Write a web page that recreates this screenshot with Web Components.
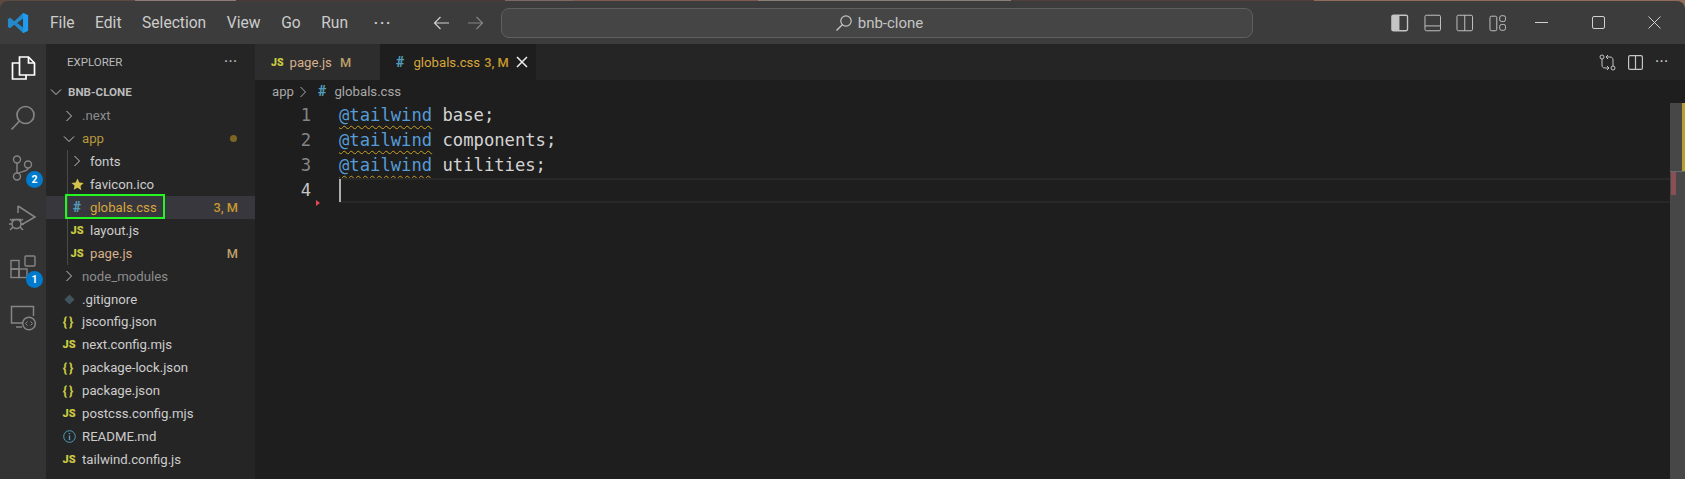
<!DOCTYPE html>
<html>
<head>
<meta charset="utf-8">
<title>bnb-clone</title>
<style>
  html, body { margin: 0; height: 100%; background: #1e1e1e; overflow: hidden; }
  body { font-family: Roboto, "Noto Sans", sans-serif; }
  vs-window { height: 479px; }
</style>
</head>
<body>
<vs-window>
  <vs-titlebar slot="top"></vs-titlebar>
  <vs-activitybar slot="left"></vs-activitybar>
  <vs-explorer slot="side">
    <file-row kind="root" label="BNB-CLONE" text="21"></file-row>
    <file-row kind="closed" label=".next" text="36" color="#8c8c8c"></file-row>
    <file-row kind="open" label="app" text="36" color="#b8983c" dot="1"></file-row>
    <file-row kind="closed" label="fonts" text="44" color="#cccccc" guide="1"></file-row>
    <file-row kind="star" label="favicon.ico" text="44" color="#cccccc" guide="1"></file-row>
    <file-row kind="hash" label="globals.css" text="44" color="#d7a63c" badge="3, M" selected="1" guide="1"></file-row>
    <file-row kind="js" label="layout.js" text="44" color="#cccccc" guide="1"></file-row>
    <file-row kind="js" label="page.js" text="44" color="#d8b08c" badge="M" guide="1"></file-row>
    <file-row kind="closed" label="node_modules" text="36" color="#8c8c8c"></file-row>
    <file-row kind="git" label=".gitignore" text="36" color="#cccccc"></file-row>
    <file-row kind="json" label="jsconfig.json" text="36" color="#cccccc"></file-row>
    <file-row kind="js" label="next.config.mjs" text="36" color="#cccccc"></file-row>
    <file-row kind="json" label="package-lock.json" text="36" color="#cccccc"></file-row>
    <file-row kind="json" label="package.json" text="36" color="#cccccc"></file-row>
    <file-row kind="js" label="postcss.config.mjs" text="36" color="#cccccc"></file-row>
    <file-row kind="info" label="README.md" text="36" color="#cccccc"></file-row>
    <file-row kind="js" label="tailwind.config.js" text="36" color="#cccccc"></file-row>
  </vs-explorer>
  <vs-tabs slot="main"></vs-tabs>
  <vs-editor slot="main">
    <code-line n="1" word="base;"></code-line>
    <code-line n="2" word="components;"></code-line>
    <code-line n="3" word="utilities;"></code-line>
    <code-line n="4" active="1"></code-line>
  </vs-editor>
</vs-window>

<script>
// small shared stroke icon helper
const icon = (w, h, vb, body, extra = "") =>
  `<svg width="${w}" height="${h}" viewBox="${vb}" fill="none" stroke="currentColor" stroke-width="1" ${extra}>${body}</svg>`;

class VsWindow extends HTMLElement {
  constructor() {
    super();
    this.attachShadow({ mode: "open" });
    this.shadowRoot.innerHTML = `
      <style>
        :host { display: flex; flex-direction: column; width: 1685px; background: #1e1e1e; }
        .head { flex: none; padding-top: 1px; background: linear-gradient(90deg, #5c4a40 0 8%, #8d7d74 8% 14%, #4a3a32 14% 30%, #7a6a62 30% 34%, #7d5a4d 34% 45%, #8a8078 45% 60%, #504038 60% 78%, #8f6b58 78% 100%); }
        .body { display: flex; flex: 1; min-height: 0; }
        .main { display: flex; flex-direction: column; flex: 1; min-width: 0; }
      </style>
      <div class="head"><slot name="top"></slot></div>
      <div class="body">
        <slot name="left"></slot>
        <slot name="side"></slot>
        <div class="main"><slot name="main"></slot></div>
      </div>`;
  }
}

class VsTitlebar extends HTMLElement {
  constructor() {
    super();
    this.attachShadow({ mode: "open" });
    const menus = ["File", "Edit", "Selection", "View", "Go", "Run"];
    this.shadowRoot.innerHTML = `
      <style>
        :host { display: flex; align-items: center; height: 43px; background: #3c3c3c; color: #cccccc; font-size: 15.6px; border-radius: 8px 8px 0 0; }
        .logo { width: 22px; height: 22px; margin-left: 7px; flex: none; }
        nav { display: flex; gap: 20.6px; margin-left: 21px; width: 383px; flex: none; }
        nav span:last-child { letter-spacing: 2px; font-weight: 700; font-size: 14px; line-height: 18px; margin-left: 5px; }
        .arrows { display: flex; gap: 17px; width: 68px; flex: none; }
        .back { color: #cfcfcf; } .forward { color: #848484; }
        .search { display: flex; align-items: center; justify-content: center; gap: 5px; box-sizing: border-box; width: 752px; height: 30px; flex: none;
          background: #454545; border: 1px solid #5f5f5f; border-radius: 8px; color: #c4c4c4; font-size: 15px; padding-left: 4px; }
        .layout { display: flex; gap: 15px; margin-left: 138px; color: #c4c4c4; width: 115px; flex: none; }
        .win { display: flex; margin-left: 29px; color: #d0d0d0; }
        .win svg { margin-right: 43.5px; }
      </style>
      <svg class="logo" viewBox="0 0 24 24">
        <path d="M17.5 1 23 3.6v16.8L17.5 23 8 14l-4.6 3.6L1 16.4V7.6l2.4-1.2L8 10z" fill="#2489ca"/>
        <path d="M17.5 7 11 12l6.5 5z" fill="#3c3c3c"/>
        <path d="M17.5 1 23 3.6v16.8L17.5 23z" fill="#1f9cf0"/>
      </svg>
      <nav>${menus.map(m => `<span>${m}</span>`).join("")}<span>···</span></nav>
      <div class="arrows">
        ${icon(17, 16, "0 0 17 16", '<path d="M16 8H1.5M7.5 2 1.5 8l6 6" stroke-width="1.2"/>', 'class="back"')}
        ${icon(17, 16, "0 0 17 16", '<path d="M1 8h14.5M9.5 2l6 6-6 6" stroke-width="1.2"/>', 'class="forward"')}
      </div>
      <div class="search">
        ${icon(18, 18, "0 0 18 18", '<circle cx="11" cy="7" r="5.2" stroke-width="1.2"/><path d="M7.3 10.7 1.5 16.5" stroke-width="1.4"/>')}
        <span>bnb-clone</span>
      </div>
      <div class="layout">
        <svg width="18" height="18" viewBox="0 0 18 18" fill="none" stroke="currentColor" stroke-width="1.4"><rect x="1" y="1" width="16" height="16" rx="1.5"/><path d="M1.5 1.5H8v15H1.5z" fill="currentColor"/></svg>
        ${icon(18, 18, "0 0 18 18", '<rect x="1" y="1" width="16" height="16" rx="1.5"/><path d="M1 12h16"/>', 'stroke-width="1.4"')}
        ${icon(18, 18, "0 0 18 18", '<rect x="1" y="1" width="16" height="16" rx="1.5"/><path d="M9 1v16"/>', 'stroke-width="1.4"')}
        ${icon(18, 18, "0 0 18 18", '<rect x="1" y="2" width="7" height="15" rx="1.5"/><rect x="11" y="1.5" width="6" height="6" rx="2"/><rect x="11" y="10.5" width="6" height="6" rx="2"/>')}
      </div>
      <div class="win">
        ${icon(13, 13, "0 0 13 13", '<path d="M0 6.5h13"/>')}
        ${icon(13, 13, "0 0 13 13", '<rect x=".5" y=".5" width="12" height="12" rx="1.5"/>')}
        ${icon(13, 13, "0 0 13 13", '<path d="M.5.5l12 12M12.5.5l-12 12"/>')}
      </div>`;
  }
}

class VsActivitybar extends HTMLElement {
  constructor() {
    super();
    this.attachShadow({ mode: "open" });
    this.shadowRoot.innerHTML = `
      <style>
        :host { display: flex; flex-direction: column; align-items: center; width: 46px; flex: none; background: #333333; color: #858585; padding-top: 11px; box-sizing: border-box; }
        .item { position: relative; width: 26px; height: 26px; margin-bottom: 24px; display: flex; justify-content: center; align-items: center; }
        .item.on { color: #ffffff; }
        .item svg { flex: none; }
        .badge { position: absolute; left: 16px; top: 16px; width: 17px; height: 17px; border-radius: 50%; background: #007acc; color: #fff; font-size: 10.5px; font-weight: 700; display: flex; align-items: center; justify-content: center; }
      </style>
      <div class="item on">
        <svg width="26" height="26" viewBox="0 0 26 26" fill="none" stroke="currentColor" stroke-width="1.7"><path d="M9.5 2h9l6 6v12h-15z"/><path d="M18.5 2v6h6"/><path d="M9.5 8H2.5v16H16v-4"/></svg>
      </div>
      <div class="item">
        <svg width="26" height="26" viewBox="0 0 26 26" fill="none" stroke="currentColor" stroke-width="1.7"><circle cx="15.5" cy="10" r="8.5"/><path d="M9.5 16 1.5 24.5"/></svg>
      </div>
      <div class="item">
        <svg width="26" height="26" viewBox="0 0 26 26" fill="none" stroke="currentColor" stroke-width="1.4"><circle cx="7" cy="4.5" r="3.5"/><circle cx="7" cy="21.5" r="3.5"/><circle cx="18" cy="9.5" r="3.5"/><path d="M7 8v10M18 13c0 4-7 3-10 5.5"/></svg>
        <span class="badge">2</span>
      </div>
      <div class="item">
        <svg width="28" height="28" viewBox="0 0 28 28" fill="none" stroke="currentColor" stroke-width="1.5"><path d="M9 2l17 11-14 8M9 2v7"/><circle cx="7.5" cy="20" r="4.5"/><path d="M1 15l3 2.5M14 15l-3 2.5M0 20h3M12 20h3M1 26l3-3M14 26l-3-3M3 15.5h9"/></svg>
      </div>
      <div class="item">
        <svg width="26" height="26" viewBox="0 0 26 26" fill="none" stroke="currentColor" stroke-width="1.4"><rect x="1" y="5.5" width="8" height="8.5"/><rect x="1" y="14" width="8" height="8.5"/><rect x="9" y="14" width="8" height="8.5"/><rect x="15" y="1" width="10" height="10" rx="1"/></svg>
        <span class="badge">1</span>
      </div>
      <div class="item">
        <svg width="26" height="26" viewBox="0 0 26 26" fill="none" stroke="currentColor" stroke-width="1.5"><path d="M13 18H1.5V1.5h22V11"/><path d="M6 22h6"/><circle cx="19" cy="18.5" r="6.3"/><path d="M17.5 16.5l-2 2 2 2M20.5 16.5l2 2-2 2" stroke-width="1"/></svg>
      </div>`;
  }
}

class VsExplorer extends HTMLElement {
  constructor() {
    super();
    this.attachShadow({ mode: "open" });
    this.shadowRoot.innerHTML = `
      <style>
        :host { display: block; width: 209px; flex: none; background: #252526; color: #bbbbbb; }
        header { display: flex; align-items: center; justify-content: space-between; height: 36px; padding: 0 17px 0 21px; font-size: 11.5px; }
        .dots { letter-spacing: 1px; font-weight: 700; font-size: 12px; }
      </style>
      <header><span>EXPLORER</span><span class="dots">···</span></header>
      <slot></slot>`;
  }
}

// one row of the file tree, "text" is the x of the label inside the row
class FileRow extends HTMLElement {
  constructor() {
    super();
    this.attachShadow({ mode: "open" });
  }
  getGlyph(kind) {
    if (kind === "root" || kind === "open") return `<svg width="12" height="12" viewBox="0 0 12 12" fill="none" stroke="#c5c5c5"><path d="M1 3.5l5 5 5-5"/></svg>`;
    if (kind === "closed") return `<svg width="12" height="12" viewBox="0 0 12 12" fill="none" stroke="#c5c5c5"><path d="M3.5 1l5 5-5 5"/></svg>`;
    if (kind === "js") return `<b class="ic" style="color:#cbcb41;font-size:11px;font-weight:900">JS</b>`;
    if (kind === "json") return `<b class="ic" style="color:#cbcb41;font-size:13px;font-weight:700;letter-spacing:2px">{}</b>`;
    if (kind === "hash") return `<b class="ic" style="color:#519aba;font-size:14px;font-weight:900">#</b>`;
    if (kind === "star") return `<svg width="13" height="13" viewBox="0 0 24 24"><path d="M12 1l3.4 7.3 7.9 1-5.8 5.4 1.5 7.9L12 17.8l-7 3.8 1.5-7.9L.7 9.3l7.9-1z" fill="#d4c24a"/></svg>`;
    if (kind === "git") return `<svg width="11" height="11" viewBox="0 0 12 12"><path d="M6 .5 11.5 6 6 11.5.5 6z" fill="#41535b"/></svg>`;
    if (kind === "info") return `<svg width="13" height="13" viewBox="0 0 13 13" fill="none" stroke="#519aba"><circle cx="6.5" cy="6.5" r="5.8"/><path d="M6.5 5.5v4.5M6.5 3v1.2" stroke-width="1.4"/></svg>`;
    return "";
  }
  connectedCallback() {
    const kind = this.getAttribute("kind");
    const text = Number(this.getAttribute("text"));
    const color = this.getAttribute("color") || "#bbbbbb";
    const badge = this.getAttribute("badge");
    const dot = this.getAttribute("dot");
    const isRoot = kind === "root";
    this.shadowRoot.innerHTML = `
      <style>
        :host { display: flex; align-items: center; height: ${isRoot ? 24.2 : 22.93}px; box-sizing: border-box; padding-left: ${text - 23}px; padding-right: 17px; position: relative; font-size: 13.2px; color: ${color}; white-space: nowrap; }
        :host([selected]) { background: #37373d; }
        .slot { width: 20px; display: flex; justify-content: center; align-items: center; flex: none; margin-right: ${isRoot ? 2 : 3}px; }
        .name { flex: 1; ${isRoot ? "font-weight:700;font-size:11.6px;color:#bbbbbb;" : ""} }
        .ic { line-height: 1; }
        .badge { color: ${badge === "M" ? "#bfa06a" : "#c79a2e"}; font-size: 12.8px; font-weight: 500; }
        .dot { width: 7px; height: 7px; border-radius: 50%; background: #7d6623; margin-right: 1px; }
        .guide { position: absolute; left: 21px; top: 0; bottom: 0; width: 1px; background: #4a4a4a; }
        .mark { position: absolute; left: 19px; top: -2px; width: 96px; height: 21px; border: 2px solid #22f51f; box-sizing: content-box; pointer-events: none; }
      </style>
      ${this.hasAttribute("guide") ? `<i class="guide"></i>` : ""}
      <span class="slot">${this.getGlyph(kind)}</span>
      <span class="name">${this.getAttribute("label")}</span>
      ${badge ? `<span class="badge">${badge}</span>` : ""}
      ${dot ? `<span class="dot"></span>` : ""}
      ${this.hasAttribute("selected") ? `<i class="mark"></i>` : ""}`;
  }
}

class VsTabs extends HTMLElement {
  constructor() {
    super();
    this.attachShadow({ mode: "open" });
    this.shadowRoot.innerHTML = `
      <style>
        :host { display: flex; height: 36px; flex: none; background: #252526; font-size: 13.2px; align-items: stretch; }
        .tab { display: flex; align-items: center; box-sizing: border-box; white-space: nowrap; }
        .one { width: 125px; background: #2d2d2d; padding-left: 16px; color: #d8b08c; }
        .two { width: 156px; background: #1e1e1e; padding-left: 16px; color: #d7a63c; }
        .js { color: #cbcb41; font-size: 10.5px; font-weight: 900; margin-right: 6px; }
        .hash { color: #519aba; font-size: 14.5px; font-weight: 900; margin-right: 9px; }
        .st { margin-left: 8px; font-size: 12.8px; font-weight: 500; }
        .two .st { margin-left: 4px; }
        .one .st { color: #bfa06a; } .two .st { color: #c79a2e; }
        .x { margin-left: 7px; color: #eee; }
        .acts { margin-left: auto; display: flex; align-items: center; gap: 12px; padding-right: 16px; color: #c5c5c5; }
        .dots { letter-spacing: 1px; font-weight: 700; font-size: 12px; }
      </style>
      <div class="tab one"><span class="js">JS</span>page.js<span class="st">M</span></div>
      <div class="tab two"><span class="hash">#</span>globals.css<span class="st">3, M</span>
        <svg class="x" width="12" height="12" viewBox="0 0 12 12" fill="none" stroke="currentColor" stroke-width="1.5"><path d="M1 1l10 10M11 1 1 11"/></svg>
      </div>
      <div class="acts">
        <svg width="17" height="17" viewBox="0 0 17 17" fill="none" stroke="currentColor"><circle cx="3" cy="3" r="2"/><circle cx="14" cy="14" r="2"/><path d="M3 5v6c0 2 1 3 3 3h4M8 12l2 2-2 2M14 12V6c0-2-1-3-3-3H7M9 1 7 3l2 2"/></svg>
        <svg width="15" height="15" viewBox="0 0 15 15" fill="none" stroke="currentColor" stroke-width="1.2"><rect x=".6" y=".6" width="13.8" height="13.8" rx="1.5"/><path d="M7.5 1v13"/></svg>
        <span class="dots">···</span>
      </div>`;
  }
}

class VsEditor extends HTMLElement {
  constructor() {
    super();
    this.attachShadow({ mode: "open" });
    this.shadowRoot.innerHTML = `
      <style>
        :host { display: block; position: relative; flex: 1; background: #1e1e1e; overflow: hidden; }
        .crumbs { display: flex; align-items: center; height: 23px; padding-left: 17px; font-size: 13.2px; color: #a9a9a9; }
        .crumbs svg { margin: 0 10px 0 5px; }
        .crumbs b { color: #519aba; font-weight: 900; font-size: 14.5px; margin-right: 8px; }
        .ruler { position: absolute; right: 0; top: 23px; bottom: 0; width: 15px; background: #474747; }
        .ruler .warn { position: absolute; right: 0; top: 0; width: 3px; height: 68px; background: #b89c2e; }
        .ruler .err { position: absolute; left: 1px; top: 68px; width: 5px; height: 24px; background: #8a4f55; }
        .ruler .cur { position: absolute; left: 0; right: 0; top: 68px; height: 1px; background: #6a6a6a; }
        .tri { position: absolute; left: 61px; top: 120px; width: 0; height: 0; border-left: 4px solid #e5484d; border-top: 3px solid transparent; border-bottom: 3px solid transparent; }
      </style>
      <div class="crumbs">app<svg width="9" height="12" viewBox="0 0 9 12" fill="none" stroke="#a9a9a9"><path d="M1.5 1l5 5-5 5"/></svg><b>#</b>globals.css</div>
      <slot></slot>
      <i class="tri"></i>
      <div class="ruler"><i class="warn"></i><i class="err"></i><i class="cur"></i></div>`;
  }
}

class CodeLine extends HTMLElement {
  constructor() {
    super();
    this.attachShadow({ mode: "open" });
  }
  connectedCallback() {
    const word = this.getAttribute("word");
    const active = this.hasAttribute("active");
    this.shadowRoot.innerHTML = `
      <style>
        :host { display: flex; height: 25px; align-items: center; font-family: "DejaVu Sans Mono", "Liberation Mono", monospace; font-size: 17.2px; white-space: pre; }
        .num { width: 56px; text-align: right; flex: none; padding-bottom: 2px; color: ${active ? "#c6c6c6" : "#858585"}; margin-right: 28px; }
        .code { flex: 1; height: 100%; display: flex; align-items: center; box-sizing: border-box; margin-right: 15px; ${active ? "border-top: 2px solid #282828; border-bottom: 2px solid #282828;" : "padding-bottom: 2px;"} }
        .at { color: #569cd6; text-decoration: underline wavy #c9a227 1px; text-underline-offset: 4px; }
        .w { color: #d4d4d4; }
        .cursor { width: 2px; height: 23px; background: #aeafad; }
      </style>
      <span class="num">${this.getAttribute("n")}</span>
      <div class="code">${active ? `<i class="cursor"></i>` : `<span class="at">@tailwind</span><span class="w"> ${word}</span>`}</div>`;
  }
}

customElements.define("vs-window", VsWindow);
customElements.define("vs-titlebar", VsTitlebar);
customElements.define("vs-activitybar", VsActivitybar);
customElements.define("vs-explorer", VsExplorer);
customElements.define("file-row", FileRow);
customElements.define("vs-tabs", VsTabs);
customElements.define("vs-editor", VsEditor);
customElements.define("code-line", CodeLine);
</script>
</body>
</html>
